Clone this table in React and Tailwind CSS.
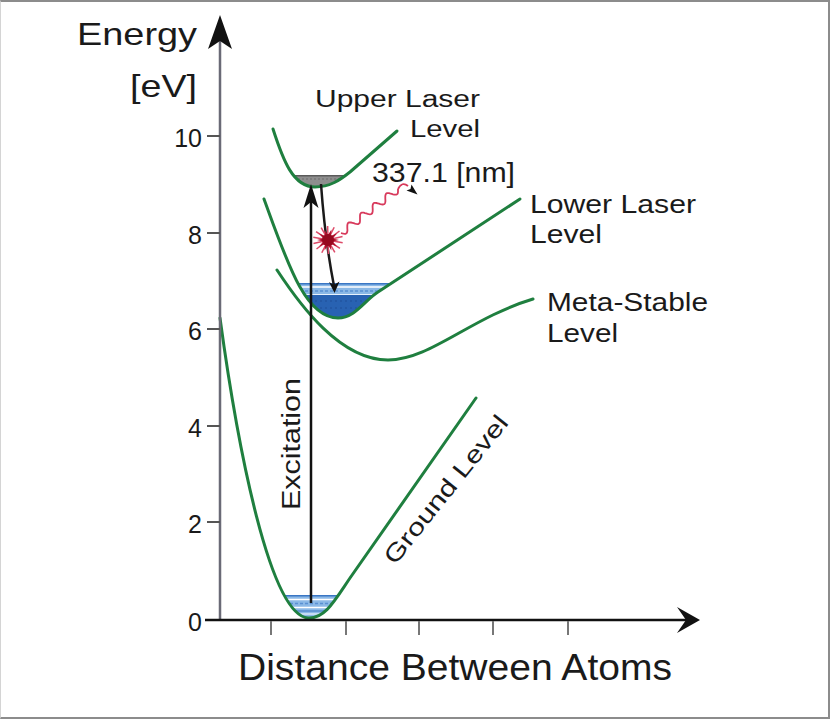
import React from "react";

const GREEN = "#1f7f3f";
const INK = "#1a1a1a";

// sine wave between two points, used for the emitted photon
function wavePath(x0, y0, x1, y1, amp, periods, steps = 90) {
  const dx = x1 - x0;
  const dy = y1 - y0;
  const len = Math.hypot(dx, dy);
  const nx = -dy / len;
  const ny = dx / len;
  let d = "";
  for (let i = 0; i <= steps; i++) {
    const t = i / steps;
    const s = amp * Math.sin(t * periods * Math.PI * 2);
    const x = x0 + dx * t + nx * s;
    const y = y0 + dy * t + ny * s;
    d += (i ? "L" : "M") + x.toFixed(1) + "," + y.toFixed(1);
  }
  return d;
}

function starPoints(cx, cy, outer, inner, n) {
  const pts = [];
  for (let i = 0; i < n * 2; i++) {
    const r = i % 2 ? inner : outer;
    const a = (Math.PI * i) / n;
    pts.push((cx + r * Math.cos(a)).toFixed(1) + "," + (cy + r * Math.sin(a)).toFixed(1));
  }
  return pts.join(" ");
}

const upperCurve = "M273,129 C283,160 293,187 315,187 C330,187 340,180 350,172 L397,131";
const lowerCurve = "M264,199 C287,262 305,318 338,318 C355,318 365,300 378,292 L520,199";
const metaCurve = "M277,270 C300,305 340,360 388,360 C430,360 470,318 533,299";
const groundCurve = "M220,318 C238,450 270,615 308,618 C325,619 335,600 350,578 L476,398";

const ticksY = [
  { v: "10", y: 136 },
  { v: "8", y: 233 },
  { v: "6", y: 329 },
  { v: "4", y: 426 },
  { v: "2", y: 522 },
  { v: "0", y: 620 },
];

const ticksX = [271, 346, 419, 493, 568];

function Label({ x, y, size, len, children, transform }) {
  return (
    <text
      x={x}
      y={y}
      fontSize={size}
      textLength={len}
      lengthAdjust="spacingAndGlyphs"
      transform={transform}
    >
      {children}
    </text>
  );
}

function EnergyDiagram() {
  const rays = [];
  for (let i = 0; i < 14; i++) {
    const a = (Math.PI * 2 * i) / 14 + 0.2;
    rays.push(
      <line
        key={i}
        x1={328 + 5 * Math.cos(a)}
        y1={240 + 5 * Math.sin(a)}
        x2={328 + 15 * Math.cos(a)}
        y2={240 + 14 * Math.sin(a)}
        stroke="#dd4a68"
        strokeWidth="1.5"
      />
    );
  }

  return (
    <svg
      width="827"
      height="715"
      viewBox="1 2 827 715"
      className="block font-['Liberation_Sans',Arial,sans-serif]"
    >
      <defs>
        <clipPath id="upperClip">
          <path d={upperCurve + " Z"} />
        </clipPath>
        <clipPath id="lowerClip">
          <path d={lowerCurve + " Z"} />
        </clipPath>
        <clipPath id="groundClip">
          <path d={groundCurve + " Z"} />
        </clipPath>
      </defs>

      {/* filled vibrational levels */}
      <g clipPath="url(#upperClip)">
        <rect x="290" y="175" width="70" height="16" fill="#8e8e8e" />
        <line x1="290" y1="175.8" x2="360" y2="175.8" stroke="#5a5a5a" strokeWidth="1.6" />
        <line x1="290" y1="179" x2="360" y2="179" stroke="#6c6c6c" strokeWidth="1" strokeDasharray="2 2" />
      </g>

      <g clipPath="url(#lowerClip)">
        <rect x="280" y="283" width="130" height="40" fill="#2862b2" />
        <rect x="280" y="283" width="130" height="12" fill="#8ab8e6" />
        <line x1="280" y1="283.8" x2="410" y2="283.8" stroke="#3a76c4" strokeWidth="1.6" />
        <line x1="280" y1="287" x2="410" y2="287" stroke="#ffffff" strokeWidth="1.4" />
        <line x1="280" y1="291" x2="410" y2="291" stroke="#5a90d2" strokeWidth="1.4" strokeDasharray="3 2" />
        <line x1="280" y1="294.5" x2="410" y2="294.5" stroke="#e8f2fc" strokeWidth="1" />
        <line x1="280" y1="301" x2="410" y2="301" stroke="#1f4f98" strokeWidth="1" strokeDasharray="2 3" />
        <line x1="280" y1="308" x2="410" y2="308" stroke="#1f4f98" strokeWidth="1" strokeDasharray="2 3" />
      </g>

      <g clipPath="url(#groundClip)">
        <rect x="270" y="595" width="90" height="30" fill="#8cb9e7" />
        <line x1="270" y1="595.8" x2="360" y2="595.8" stroke="#3a76c4" strokeWidth="1.6" />
        <line x1="270" y1="599.5" x2="360" y2="599.5" stroke="#ffffff" strokeWidth="1.4" />
        <line x1="270" y1="603.5" x2="360" y2="603.5" stroke="#5a90d2" strokeWidth="1.4" strokeDasharray="3 2" />
        <line x1="270" y1="607.5" x2="360" y2="607.5" stroke="#ffffff" strokeWidth="1.4" />
        <line x1="270" y1="611" x2="360" y2="611" stroke="#3a76c4" strokeWidth="1.2" />
        <line x1="270" y1="614" x2="360" y2="614" stroke="#ffffff" strokeWidth="1.2" />
      </g>

      {/* potential curves */}
      <g fill="none" stroke={GREEN} strokeWidth="3" strokeLinecap="round" strokeLinejoin="round">
        <path d={upperCurve} />
        <path d={lowerCurve} />
        <path d={metaCurve} />
        <path d={groundCurve} />
      </g>

      {/* axes */}
      <line x1="220" y1="38" x2="220" y2="621" stroke="#6a6a76" strokeWidth="2.5" />
      <polygon points="220,15 232,49 220,41 208,49" fill="#111" />
      {ticksY.map((t) => (
        <line key={t.v} x1="207" y1={t.y} x2="220" y2={t.y} stroke="#555" strokeWidth="2" />
      ))}
      <line x1="205" y1="620" x2="688" y2="620" stroke="#111" strokeWidth="2.5" />
      <polygon points="700,620 677,607 686,620 677,633" fill="#111" />
      {ticksX.map((x) => (
        <line key={x} x1={x} y1="621" x2={x} y2="635" stroke="#777" strokeWidth="2" />
      ))}

      {/* excitation arrow */}
      <line x1="311" y1="603" x2="311" y2="200" stroke="#111" strokeWidth="2.5" />
      <polygon points="311,184 318.5,208 311,202 303.5,208" fill="#111" />

      {/* laser transition */}
      <path d="M321,184 Q325,240 334,286" fill="none" stroke="#1a1a1a" strokeWidth="2.5" />
      <polygon points="334.5,293 329,282 334,285 339.5,281.5" fill="#111" />

      {/* photon */}
      <path d={wavePath(341, 233, 398, 189, 3.6, 4.5)} fill="none" stroke="#d83a5c" strokeWidth="1.8" />
      <path d="M398,189 Q402,181 408,186" fill="none" stroke="#d83a5c" strokeWidth="1.8" />
      <polygon points="417.5,194.5 406.5,190.5 410.5,189 411.5,184.5" fill="#111" />
      {rays}
      <polygon points={starPoints(328, 240, 11, 5, 10)} fill="#b0122e" />
      <circle cx="328" cy="240" r="6" fill="#96091f" />

      {/* labels */}
      <g fill={INK}>
        <Label x={77} y={45} size={32} len={120}>Energy</Label>
        <Label x={130} y={97} size={32} len={67}>[eV]</Label>
        {ticksY.map((t) => (
          <text key={t.v} x="202" y={t.y + 11} fontSize="25" textAnchor="end">
            {t.v}
          </text>
        ))}
        <Label x={315} y={107} size={23} len={165}>Upper Laser</Label>
        <Label x={410} y={137} size={23} len={70}>Level</Label>
        <Label x={372} y={182} size={27} len={143}>337.1 [nm]</Label>
        <Label x={530} y={213} size={25} len={166}>Lower Laser</Label>
        <Label x={530} y={243} size={25} len={72}>Level</Label>
        <Label x={547} y={311} size={25} len={161}>Meta-Stable</Label>
        <Label x={547} y={342} size={25} len={71}>Level</Label>
        <Label x={300} y={510} size={26} len={132} transform="rotate(-90 300 510)">
          Excitation
        </Label>
        <Label x={395} y={566} size={24} len={183} transform="rotate(-51.3 395 566)">
          Ground Level
        </Label>
        <Label x={238} y={680} size={36} len={434}>Distance Between Atoms</Label>
      </g>
    </svg>
  );
}

export default function App() {
  return (
    <div className="h-[719px] w-[830px] border-b-2 border-l border-r-2 border-t-2 border-[#8c8c8c] border-l-[#d4d4d4] bg-white">
      <EnergyDiagram />
    </div>
  );
}
